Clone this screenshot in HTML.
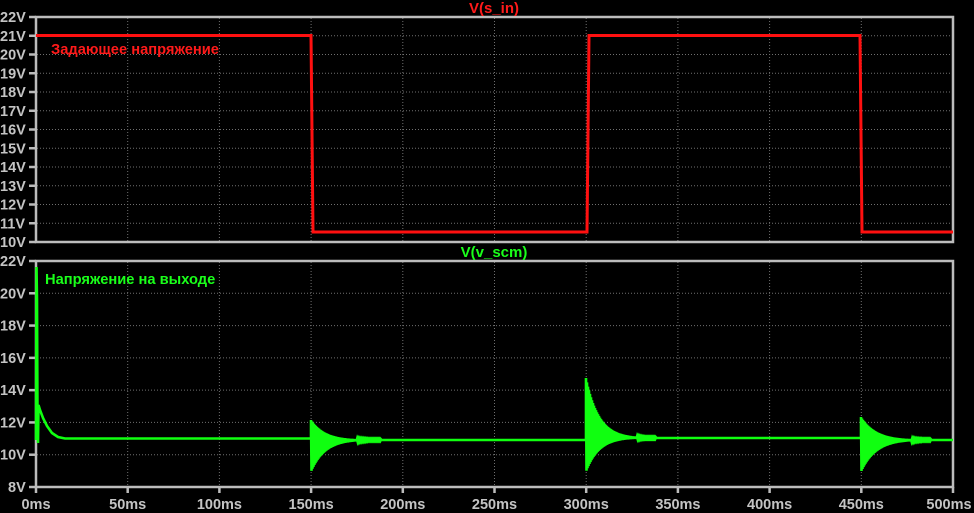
<!DOCTYPE html>
<html><head><meta charset="utf-8">
<style>
html,body{margin:0;padding:0;background:#000;width:974px;height:513px;overflow:hidden}
svg{display:block}
text{font-family:"Liberation Sans",sans-serif;font-weight:bold}
</style></head><body>
<svg id="s" width="974" height="513" xmlns="http://www.w3.org/2000/svg">
<rect width="974" height="513" fill="#000"/>
<g id="grid" stroke="#707070" stroke-width="1" stroke-dasharray="1,2"></g>
<g id="frames" fill="none" stroke="#bcbcbc" stroke-width="2.5">
<rect x="36" y="17" width="917" height="225"/>
<rect x="36" y="261" width="917" height="226"/>
</g>
<g id="ticks" stroke="#bcbcbc" stroke-width="2.5"></g>
<g id="labels" fill="#c4c4c4" font-size="14.5"></g>
<polyline fill="none" stroke="#ff1010" stroke-width="3" points="36,35.5 311,35.5 313,232 587,232 589,35.5 860,35.5 862,232 953,232"/>
<path id="g" fill="none" stroke="#10ff10" stroke-width="2.6"/>
<text x="494" y="13" fill="#ff1a1a" font-size="15" text-anchor="middle">V(s_in)</text>
<text x="494" y="257" fill="#1aff1a" font-size="15" text-anchor="middle">V(v_scm)</text>
<text x="51" y="54" fill="#ff1a1a" font-size="14.7">Задающее напряжение</text>
<text x="45" y="284" fill="#1aff1a" font-size="14.7">Напряжение на выходе</text>
</svg>
<script>
var NS="http://www.w3.org/2000/svg";
function el(p,t,a,txt){var e=document.createElementNS(NS,t);for(var k in a)e.setAttribute(k,a[k]);if(txt)e.textContent=txt;document.getElementById(p).appendChild(e);}
var X0=36,PX=917/500;
for(var i=1;i<10;i++){var x=X0+i*50*PX;
 el("grid","line",{x1:x,y1:18,x2:x,y2:241});
 el("grid","line",{x1:x,y1:262,x2:x,y2:486});}
for(var i=0;i<=10;i++){var x=X0+i*50*PX;el("ticks","line",{x1:x,y1:487,x2:x,y2:493});
 el("labels","text",{x:(i==10?x-4:x),y:509,"text-anchor":"middle"},(i*50)+"ms");}
for(var v=10;v<=22;v++){var y=17+(22-v)*225/12;
 if(v>10&&v<22)el("grid","line",{x1:37,y1:y,x2:952,y2:y});
 el("ticks","line",{x1:29,y1:y,x2:36,y2:y});
 el("labels","text",{x:0,y:y+5},v+"V");}
for(var v=8;v<=22;v+=2){var y=261+(22-v)*226/14;
 if(v>8&&v<22)el("grid","line",{x1:37,y1:y,x2:952,y2:y});
 el("ticks","line",{x1:29,y1:y,x2:36,y2:y});
 el("labels","text",{x:(v<10?8:0),y:y+5},v+"V");}
var d="M36,440 L36.5,267 L37,300 L37.5,420 L38,443 L38.5,405 L40,410 L43,418 L47,426 L52,433 L58,437 L65,438.5";
function burst(x0,xend,end,up,dn,tau){
 var s="",stop=Math.min(xend,x0+70);
 for(var x=x0;x<=stop;x+=0.5){
  var t=x-x0,k=Math.exp(-t/tau);
  var amp=(Math.round(x*2)%2==0)?-Math.max(up*k,0.6):Math.max(dn*k,0.5);
  s+=" L"+x.toFixed(1)+","+(end+amp).toFixed(1);
 }
 s+=" L"+(stop+0.5)+","+end+" L"+xend+","+end;
 return s;}
d+=" L311,438.5";
d+=burst(311,586,440,20,32,14);
d+=burst(586,861,438,60,34,13);
d+=burst(861,953,440,23,32,15);
document.getElementById("g").setAttribute("d",d);
</script>
</body></html>
